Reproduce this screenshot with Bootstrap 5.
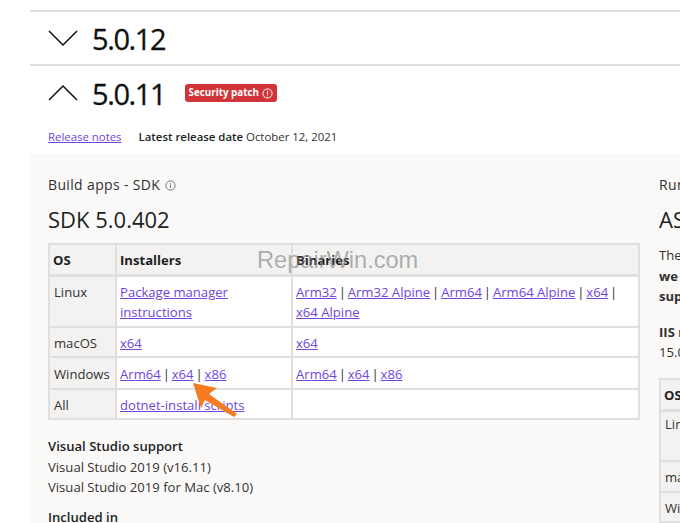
<!doctype html>
<html lang="en"><head><meta charset="utf-8"><title>.NET 5.0 downloads</title>
<link href="https://cdn.jsdelivr.net/npm/bootstrap@5.3.0/dist/css/bootstrap.min.css" rel="stylesheet">
<style>
html,body{height:523px;overflow:hidden;background:#fff}
body{font-family:"Open Sans","Noto Sans",sans-serif;font-size:13.1px;color:#323130;position:relative}
a{color:#6f45dc;word-spacing:0}
.shell{margin-left:30px;padding-top:10px;height:523px;overflow:hidden}
.relrow{border-top:2px solid #dcdcdc;padding-left:18px}
.relrow.one{height:54px;gap:14px}
.relrow.two{height:90px;display:block}
.relhead{height:54px;gap:14px}
.ver{font-size:29px;color:#111;line-height:1;font-weight:400;letter-spacing:-1.4px;-webkit-text-stroke:.3px #111;margin:0}
.sec{background:#d13438;color:#fff;font-weight:700;font-size:9.8px;border-radius:3px;padding:2px 4px;line-height:14px;gap:3px;margin-left:5.4px}
.meta{gap:17px;font-size:11.4px;margin-top:9px;line-height:16px}
.meta b{color:#201f1e;font-weight:600}
.panel{background:#faf9f8;padding:22px 0 0 18px;gap:19px;height:369px;overflow:hidden}
.colbox{flex:0 0 592px;width:592px}
.eyebrow{font-size:14px;letter-spacing:.35px;line-height:18px;margin-bottom:11px;gap:5px}
.sdk{font-size:22px;line-height:28px;color:#201f1e;font-weight:400;margin:0 0 10px}
.tbl{border-collapse:collapse;width:592px;table-layout:fixed;background:#fff;margin:0}
.tbl th,.tbl td{border:2px solid #e1dfdd;padding:5px 4px 3.5px 3px;line-height:20px;vertical-align:top;font-weight:400;word-spacing:-1.5px}
.tbl thead th{background:#f3f2f1;font-weight:700;color:#201f1e;border-bottom-width:3px;padding:5px 4px 4px 3px}
.tbl tbody th{background:#f3f2f1;padding-left:4px}
.tbl .rowtall th,.tbl .rowtall td{padding-top:5.5px;padding-bottom:4px}
.tbl .rowlin th{padding-top:2px;padding-bottom:6.5px}
.vs{line-height:20.5px;margin-top:16px}
.vs b,.incl{font-weight:600;color:#201f1e}
.incl{margin-top:9px;line-height:20px}
.rt{white-space:nowrap;overflow:hidden}
.rt .sdk{margin-bottom:12px}
.rt p{line-height:20.5px;margin:0}
.rt p.iis{margin-top:15px}
.tbl2{width:300px;margin-top:15px}
.mark-w{position:absolute;left:257px;top:245px;font-family:"Liberation Sans",sans-serif;font-size:23.6px;line-height:30px;color:rgba(125,125,125,.6);white-space:nowrap}
.arrow{position:absolute;left:190px;top:382px}
</style></head><body>
<div class="shell">
  <div class="relrow one d-flex align-items-center">
    <svg width="30" height="18" viewBox="0 0 30 18"><path d="M1 2 15 16 29 2" fill="none" stroke="#111" stroke-width="1.5"/></svg>
    <h3 class="ver">5.0.12</h3>
  </div>
  <div class="relrow two">
    <div class="relhead d-flex align-items-center">
      <svg width="30" height="18" viewBox="0 0 30 18"><path d="M1 16 15 2 29 16" fill="none" stroke="#111" stroke-width="1.5"/></svg>
      <h3 class="ver">5.0.11</h3>
      <span class="sec d-inline-flex align-items-center">Security patch
        <svg width="11" height="11" viewBox="0 0 11 11"><circle cx="5.5" cy="5.5" r="4.6" fill="none" stroke="#fff"/><path d="M5.500 2.800v3.800M5.500 7.400v1" stroke="#fff"/></svg></span>
    </div>
    <div class="meta d-flex"><a href="#">Release notes</a><span><b>Latest release date</b> October 12, 2021</span></div>
  </div>
  <div class="panel d-flex">
    <div class="colbox">
      <div class="eyebrow d-flex align-items-center">Build apps - SDK
        <svg width="11" height="11" viewBox="0 0 11 11"><circle cx="5.5" cy="5.5" r="4.6" fill="none" stroke="#777"/><path d="M5.500 4.600v3.600M5.500 2.700v1" stroke="#777"/></svg></div>
      <h4 class="sdk">SDK 5.0.402</h4>
      <table class="tbl">
        <colgroup><col style="width:67px"><col style="width:176px"><col></colgroup>
        <thead><tr><th>OS</th><th>Installers</th><th>Binaries</th></tr></thead>
        <tbody>
          <tr><th>Linux</th><td><a href="#">Package manager instructions</a></td>
            <td><a href="#">Arm32</a> | <a href="#">Arm32 Alpine</a> | <a href="#">Arm64</a> | <a href="#">Arm64 Alpine</a> | <a href="#">x64</a> | <a href="#">x64 Alpine</a></td></tr>
          <tr><th>macOS</th><td><a href="#">x64</a></td><td><a href="#">x64</a></td></tr>
          <tr class="rowtall"><th>Windows</th><td><a href="#">Arm64</a> | <a href="#">x64</a> | <a href="#">x86</a></td><td><a href="#">Arm64</a> | <a href="#">x64</a> | <a href="#">x86</a></td></tr>
          <tr><th>All</th><td><a href="#">dotnet-install scripts</a></td><td></td></tr>
        </tbody>
      </table>
      <div class="vs"><b>Visual Studio support</b><br>Visual Studio 2019 (v16.11)<br>Visual Studio 2019 for Mac (v8.10)</div>
      <div class="incl">Included in</div>
    </div>
    <div class="colbox rt">
      <div class="eyebrow">Run apps - Runtime</div>
      <h4 class="sdk">ASP.NET Core Runtime 5.0.11</h4>
      <p>The ASP.NET Core Runtime enables you to run existing web/server applications. On Windows,</p>
      <p><b>we recommend installing the Hosting Bundle</b></p>
      <p><b>support.</b></p>
      <p class="iis"><b>IIS runtime support</b></p>
      <p>15.0</p>
      <table class="tbl tbl2">
        <colgroup><col style="width:67px"><col></colgroup>
        <thead><tr><th>OS</th><th>Installers</th></tr></thead>
        <tbody>
          <tr class="rowlin"><th>Linux<br>&nbsp;</th><td></td></tr>
          <tr><th>macOS</th><td></td></tr>
          <tr><th>Windows</th><td></td></tr>
        </tbody>
      </table>
    </div>
  </div>
</div>
<div class="mark-w">RepairWin.com</div>
<svg class="arrow" width="50" height="38" viewBox="0 0 50 38"><path d="M3 1 27 6 19 12 47 32 44 35 15 18 11 26Z" fill="#f47b20"/></svg>
</body></html>
